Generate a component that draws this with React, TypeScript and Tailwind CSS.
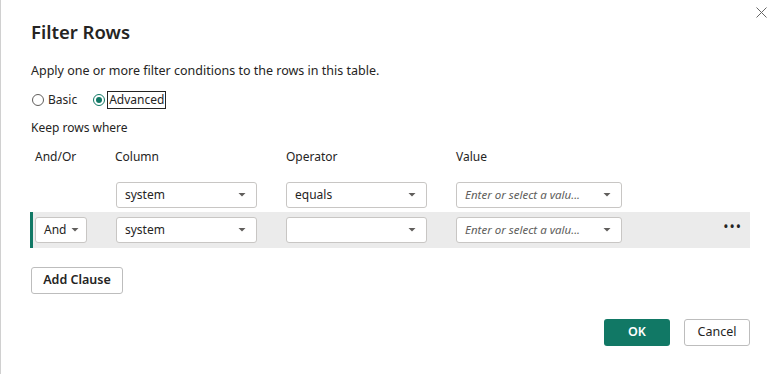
import React from "react";

const Caret = () => (
  <svg width="8" height="4" viewBox="0 0 8 4" className="shrink-0">
    <path d="M0.5 0 L7.5 0 L4 3.5 Z" fill="#605e5c" />
  </svg>
);

function Select({ w, text, italic, placeholder, pr = "pr-[10px]" }: { w: string; text?: string; italic?: boolean; placeholder?: boolean; pr?: string }) {
  return (
    <div className={`${w} ${pr} h-[26px] bg-white border border-[#c8c6c4] rounded-[3px] flex items-center justify-between pl-[8px]`}>
      <span className={`${italic ? "italic text-[11.5px]" : "text-[12px]"} ${placeholder ? "text-[#605e5c]" : "text-[#252423]"}`}>{text}</span>
      <Caret />
    </div>
  );
}

export default function App() {
  return (
    <div
      className="w-[778px] h-[374px] bg-white relative border-l border-[#d0d0d0] overflow-hidden"
      style={{ fontFamily: '"Noto Sans", "Open Sans", sans-serif' }}
    >
      <button className="absolute right-[8px] top-[3px] w-[18px] h-[18px] flex items-center justify-center">
        <svg width="11" height="11" viewBox="0 0 11 11">
          <path d="M0.5 0.5 L10.5 10.5 M10.5 0.5 L0.5 10.5" stroke="#666" strokeWidth="1" />
        </svg>
      </button>
      <div className="pl-[30px] pr-[28px] pt-[18px]">
        <h1 className="text-[18.5px] font-semibold text-[#252423] leading-[28px]">Filter Rows</h1>
        <p className="mt-[15px] text-[12.5px] text-[#252423] leading-[20px]">Apply one or more filter conditions to the rows in this table.</p>
        <div className="mt-[9px] flex items-center h-[20px] text-[12px] text-[#252423]">
          <span className="w-[12px] h-[12px] rounded-full border border-[#605e5c] ml-[1px]" />
          <span className="ml-[4px]">Basic</span>
          <span className="ml-[16px] w-[12px] h-[12px] rounded-full border border-[#117865] flex items-center justify-center">
            <span className="w-[6px] h-[6px] rounded-full bg-[#117865]" />
          </span>
          <span className="ml-[2px] px-[1px] border border-[#252423] leading-[16px]">Advanced</span>
        </div>
        <p className="mt-[8px] text-[12px] text-[#252423] leading-[20px]">Keep rows where</p>
        <div className="mt-[9px] flex text-[12px] text-[#252423] leading-[20px]">
          <span className="w-[84px] pl-[4px]">And/Or</span>
          <span className="w-[171px]">Column</span>
          <span className="w-[170px]">Operator</span>
          <span>Value</span>
        </div>
        <div className="mt-[15px] flex items-center h-[26px] pl-[85px] gap-[29px]">
          <Select w="w-[141px]" text="system" />
          <Select w="w-[141px]" text="equals" />
          <Select w="w-[166px]" text="Enter or select a valu..." italic placeholder />
        </div>
        <div className="mt-[4px] -ml-[1px] h-[36px] w-[720px] bg-[#ebebeb] border-l-[3px] border-[#117865] flex items-center pl-[2px]">
          <Select w="w-[52px]" text="And" pr="pr-[7px]" />
          <div className="ml-[29px] flex items-center gap-[29px]">
            <Select w="w-[141px]" text="system" />
            <Select w="w-[141px]" text="" />
            <Select w="w-[166px]" text="Enter or select a valu..." italic placeholder />
          </div>
          <span className="ml-auto mr-[8px] text-[#252423] text-[14px] tracking-[1px] leading-none -mt-[6px]">•••</span>
        </div>
        <button className="mt-[19px] h-[27px] w-[92px] bg-white border border-[#bdbdbd] rounded-[3px] text-[12.5px] font-semibold text-[#252423]">Add Clause</button>
        <div className="mt-[25px] flex justify-end gap-[14px] w-[719px]">
          <button className="h-[27px] w-[66px] bg-[#117865] rounded-[3px] text-[12.5px] font-semibold text-white">OK</button>
          <button className="h-[27px] w-[66px] bg-white border border-[#bdbdbd] rounded-[3px] text-[12.5px] text-[#252423]">Cancel</button>
        </div>
      </div>
    </div>
  );
}
